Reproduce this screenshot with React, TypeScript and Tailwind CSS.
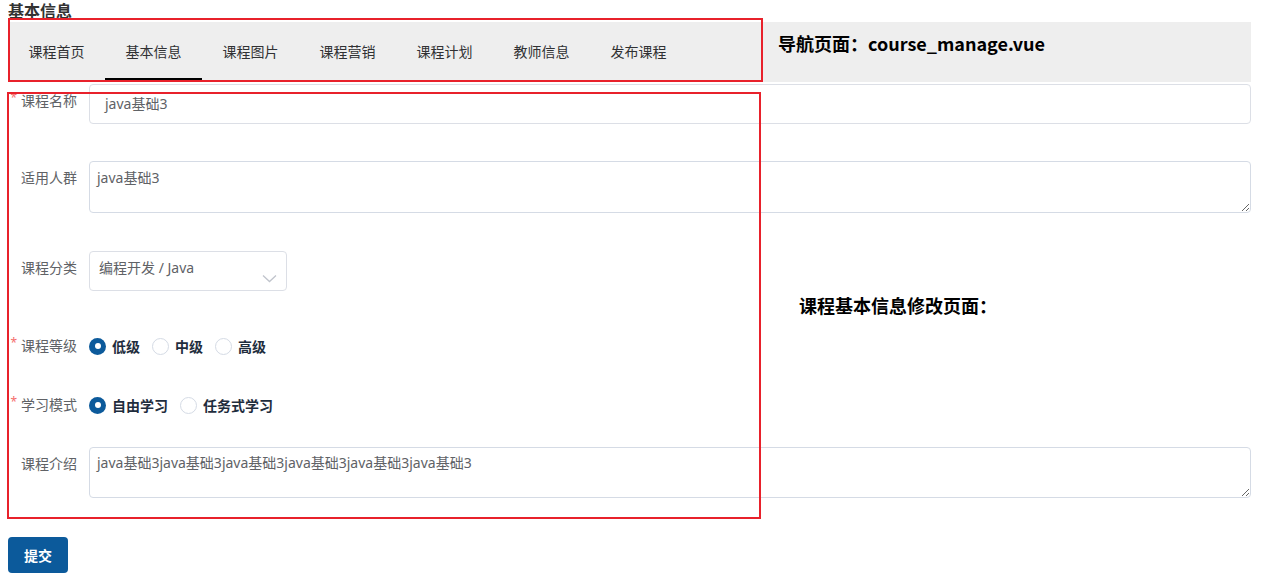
import React from "react";

const tabs = ["课程首页", "基本信息", "课程图片", "课程营销", "课程计划", "教师信息", "发布课程"];

function Label({ text, required }: { text: string; required?: boolean }) {
  return (
    <div className="w-[69px] shrink-0 text-right text-[14px] leading-[34px] text-[#606266]">
      {required && <span className="mr-[4px] align-top text-[12px] leading-[28px] text-[#f56c6c]">*</span>}
      {text}
    </div>
  );
}

function Radio({ label, checked }: { label: string; checked?: boolean }) {
  return (
    <div className="flex items-center mr-[12px]">
      {checked ? (
        <span className="flex h-[17px] w-[17px] items-center justify-center rounded-full bg-[#0c5a9b]">
          <span className="h-[6px] w-[6px] rounded-full bg-white" />
        </span>
      ) : (
        <span className="h-[17px] w-[17px] rounded-full border border-[#d5dbe5] bg-white" />
      )}
      <span className="ml-[6px] text-[14px] font-bold text-[#1f2d3d]">{label}</span>
    </div>
  );
}

export default function App() {
  return (
    <div className="relative h-[577px] w-[1262px] overflow-hidden bg-white pl-[8px] pr-[11px] font-['Noto_Sans','Noto_Sans_CJK_SC',sans-serif]">
      <div className="h-[22px] pt-[1px] text-[16px] leading-[20px] font-semibold text-[#333]">基本信息</div>

      <div className="flex h-[60px] bg-[#eeeeee]">
        {tabs.map((t, i) => (
          <div
            key={t}
            className="relative h-[60px] w-[97px] text-center text-[14px] leading-[60px] text-[#303133]"
          >
            {t}
            {i === 1 && <span className="absolute bottom-[1px] left-0 right-0 h-[3px] bg-black" />}
          </div>
        ))}
      </div>

      <div className="mt-[2px] flex flex-col">
        <div className="flex items-start">
          <Label text="课程名称" required />
          <div className="ml-[12px] h-[40px] flex-1 rounded-[4px] border border-[#dcdfe6] px-[15px] text-[14px] leading-[38px] text-[#606266]">
            java基础3
          </div>
        </div>

        <div className="mt-[37px] flex items-start">
          <Label text="适用人群" />
          <textarea
            readOnly
            defaultValue="java基础3"
            className="ml-[12px] block h-[52px] flex-1 resize-y rounded-[4px] border border-[#d5dbe5] px-[7px] pt-[5px] text-[14px] leading-[22px] text-[#606266] outline-none"
          />
        </div>

        <div className="mt-[38px] flex items-start">
          <Label text="课程分类" />
          <div className="relative ml-[12px] h-[40px] w-[198px] rounded-[4px] border border-[#dcdfe6] pl-[9px] text-[14px] leading-[32px] text-[#606266]">
            编程开发 / Java
            <svg
              className="absolute right-[9px] top-[22px]"
              width="15"
              height="9"
              viewBox="0 0 15 9"
              fill="none"
            >
              <path d="M1 1.5 L7.5 7.5 L14 1.5" stroke="#c0c4cc" strokeWidth="1.3" />
            </svg>
          </div>
        </div>

        <div className="mt-[38px] flex items-start">
          <Label text="课程等级" required />
          <div className="ml-[12px] flex h-[34px] items-center">
            <Radio label="低级" checked />
            <Radio label="中级" />
            <Radio label="高级" />
          </div>
        </div>

        <div className="mt-[25px] flex items-start">
          <Label text="学习模式" required />
          <div className="ml-[12px] flex h-[34px] items-center">
            <Radio label="自由学习" checked />
            <Radio label="任务式学习" />
          </div>
        </div>

        <div className="mt-[25px] flex items-start">
          <Label text="课程介绍" />
          <textarea
            readOnly
            defaultValue="java基础3java基础3java基础3java基础3java基础3java基础3"
            className="ml-[12px] block h-[51px] flex-1 resize-y rounded-[4px] border border-[#d5dbe5] px-[7px] pt-[4px] text-[14px] leading-[22px] text-[#606266] outline-none"
          />
        </div>

        <div className="mt-[39px]">
          <button className="h-[36px] w-[60px] rounded-[4px] bg-[#0c5a9b] text-[14px] font-semibold text-white">
            提交
          </button>
        </div>
      </div>

      {/* annotations */}
      <div className="pointer-events-none absolute left-[8px] top-[18px] h-[64px] w-[755px] border-2 border-[#e8212b]" />
      <div className="pointer-events-none absolute left-[7px] top-[92px] h-[427px] w-[754px] border-2 border-[#e8212b]" />
      <div className="absolute left-[778px] top-[32px] text-[18px] font-bold leading-[22px] text-black font-['Noto_Sans_CJK_SC',sans-serif]">
        导航页面：course_manage.vue
      </div>
      <div className="absolute left-[799px] top-[294px] text-[18px] font-bold leading-[22px] text-black font-['Noto_Sans_CJK_SC',sans-serif]">
        课程基本信息修改页面：
      </div>
    </div>
  );
}
